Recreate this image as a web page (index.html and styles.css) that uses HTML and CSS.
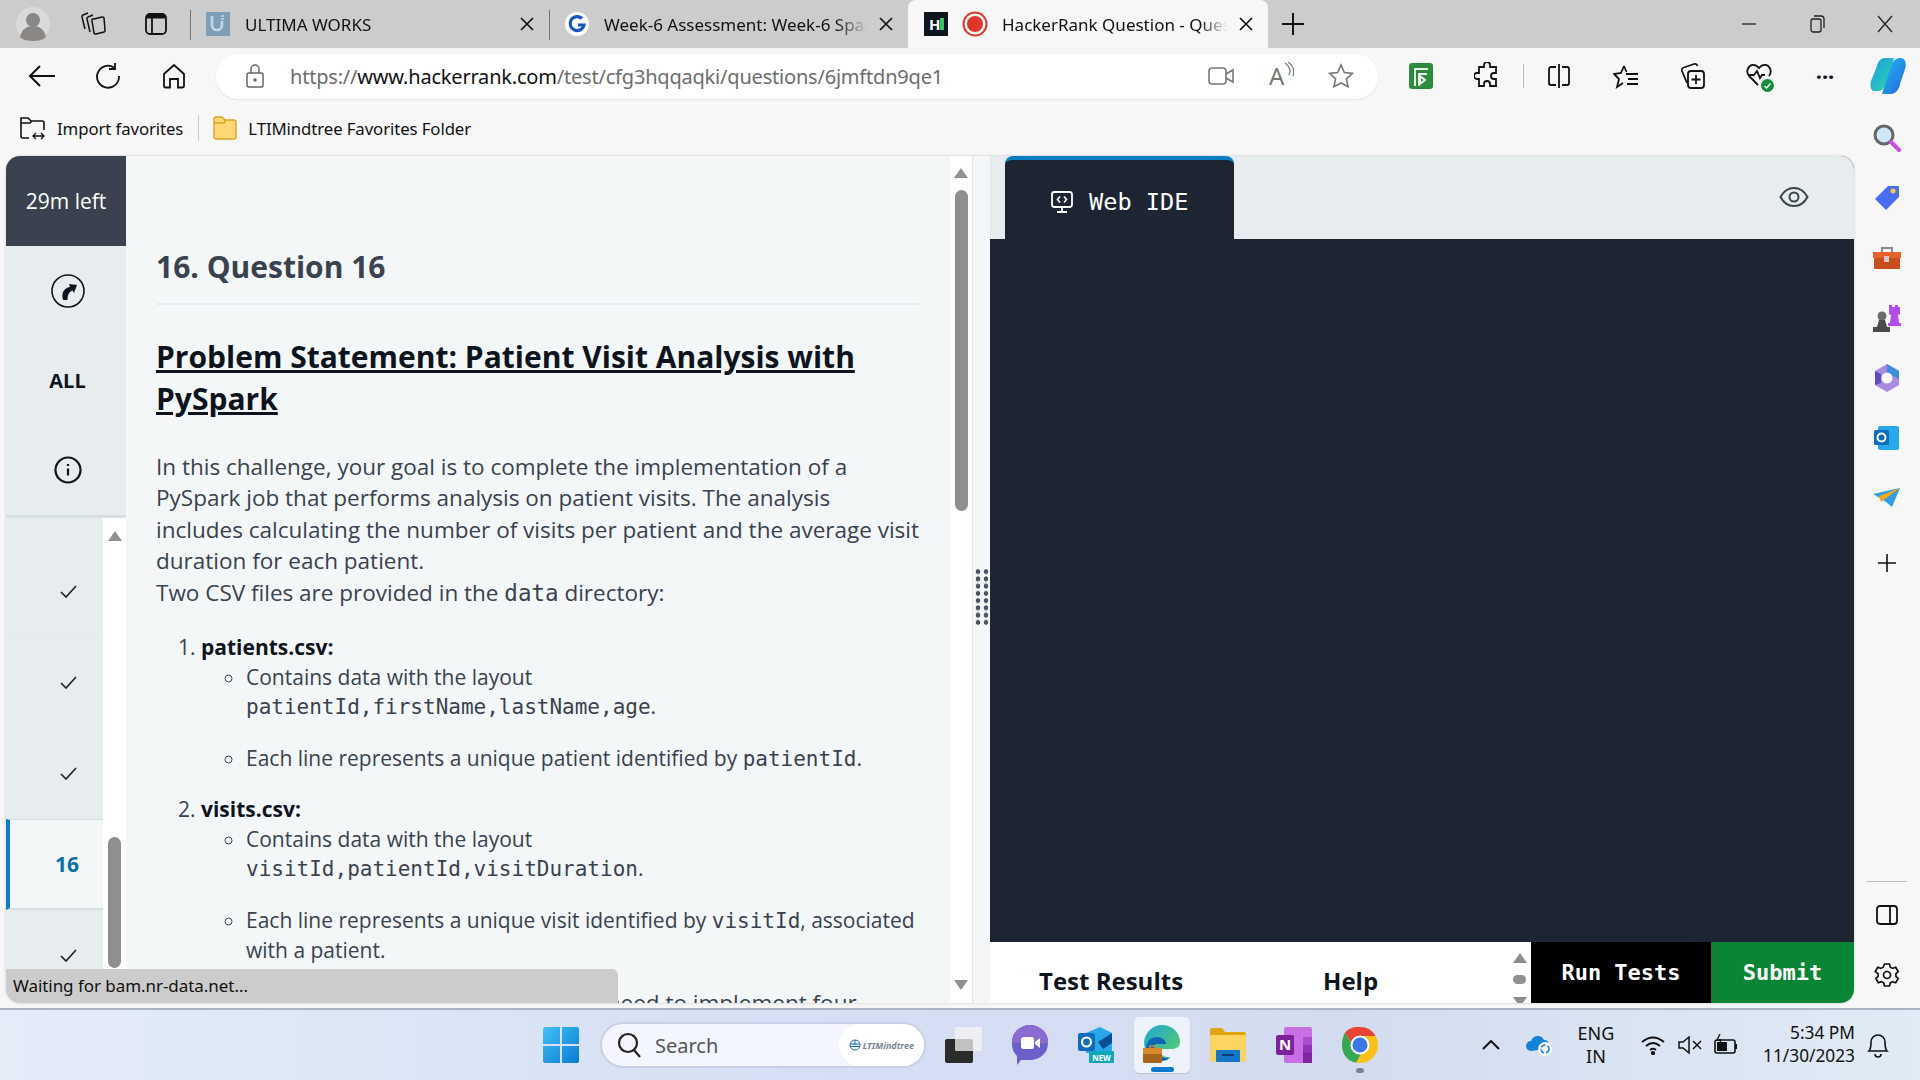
FILE: index.html
```html
<!DOCTYPE html>
<html lang="en">

<head>
    <meta charset="UTF-8">
    <title>HackerRank Question</title>
    <link rel="stylesheet" href="styles.css">
</head>

<body>
    <!-- tab strip -->
    <header class="tabstrip">
        <div class="avatar">
            <svg width="34" height="34" viewBox="0 0 34 34"><circle cx="17" cy="17" r="17" fill="#d9d9d9"/><circle cx="17" cy="13" r="7" fill="#8a8784"/><path d="M4 30c2-9 8-11 13-11s11 2 13 11c-3 3-8 4-13 4s-10-1-13-4z" fill="#8a8784"/></svg>
        </div>
        <button class="strip-btn">
            <svg width="26" height="26" viewBox="0 0 26 26" fill="none" stroke="#111" stroke-width="1.500" stroke-linejoin="round"><path d="M8 2 3 4a1.500 1.500 0 0 0-1 2l3 12"/><path d="M13 4 8 6a1.500 1.500 0 0 0-1 2l3 13"/><path d="M14 8l8-2a1.500 1.500 0 0 1 2 1l1 12a1.500 1.500 0 0 1-1 2l-8 2a1.500 1.500 0 0 1-2-1l-2-12a1.500 1.500 0 0 1 2-2z"/></svg>
        </button>
        <button class="strip-btn">
            <svg width="22" height="22" viewBox="0 0 22 22" fill="none" stroke="#111" stroke-width="1.800"><rect x="1" y="1" width="20" height="20" rx="4"/><path d="M7 5v16"/><path d="M2 3.500h18" stroke-width="4"/></svg>
        </button>
        <div class="tab">
            <svg class="favicon" width="24" height="24" viewBox="0 0 24 24"><rect width="24" height="24" fill="#7f9fb8"/><path d="M6 4v9a5 5 0 0 0 10 0V9" fill="none" stroke="#c6d6e2" stroke-width="2.600"/><path d="M15 4h3M18 7h-3" stroke="#c6d6e2" stroke-width="1.600"/></svg>
            <span class="tab-title">ULTIMA WORKS</span>
            <svg class="tab-close" width="14" height="14" viewBox="0 0 14 14" stroke="#111" stroke-width="1.700"><path d="m1 1 12 12M13 1 1 13"/></svg>
        </div>
        <div class="tab">
            <svg class="favicon" width="24" height="24" viewBox="0 0 24 24"><circle cx="12" cy="12" r="12" fill="#fff"/><path d="M17 6.500A7 7 0 1 0 19 13h-6" fill="none" stroke="#1a56c4" stroke-width="3.200"/></svg>
            <span class="tab-title">Week-6 Assessment: Week-6 Spark Fundamentals</span>
            <svg class="tab-close" width="14" height="14" viewBox="0 0 14 14" stroke="#111" stroke-width="1.700"><path d="m1 1 12 12M13 1 1 13"/></svg>
        </div>
        <div class="tab tab-active">
            <span class="favicon fav-hr">H<i class="fav-hr-bar"></i></span>
            <svg class="rec" width="26" height="26" viewBox="0 0 26 26"><circle cx="13" cy="13" r="11.500" fill="#fff" stroke="#e0352b" stroke-width="2"/><circle cx="13" cy="13" r="8" fill="#e0352b"/></svg>
            <span class="tab-title">HackerRank Question - Questions</span>
            <svg class="tab-close" width="14" height="14" viewBox="0 0 14 14" stroke="#111" stroke-width="1.700"><path d="m1 1 12 12M13 1 1 13"/></svg>
        </div>
        <svg class="new-tab" width="24" height="24" viewBox="0 0 24 24" stroke="#111" stroke-width="2"><path d="M12 1v22M1 12h22"/></svg>
        <div class="win-btns">
            <svg width="16" height="16" viewBox="0 0 16 16" stroke="#222" stroke-width="1.300"><path d="M1 8h14"/></svg>
            <svg width="16" height="18" viewBox="0 0 16 18" fill="none" stroke="#222" stroke-width="1.300"><rect x="2" y="4" width="10" height="13" rx="2"/><path d="M5 1h7q3 0 3 3v9"/></svg>
            <svg width="16" height="18" viewBox="0 0 16 18" stroke="#222" stroke-width="1.300"><path d="m1 1 14 16M15 1 1 17"/></svg>
        </div>
    </header>

    <!-- address bar -->
    <div class="toolbar">
        <svg class="tb-back" width="28" height="24" viewBox="0 0 28 24" fill="none" stroke="#111" stroke-width="2"><path d="M27 12H2M12 2 2 12l10 10"/></svg>
        <svg class="tb-reload" width="26" height="26" viewBox="0 0 26 26" fill="none" stroke="#111" stroke-width="1.800"><path d="M19 4.500A11 11 0 1 0 24 13"/><path d="M19 0v6h-6" transform="translate(1 0)"/></svg>
        <svg class="tb-home" width="24" height="26" viewBox="0 0 24 26" fill="none" stroke="#111" stroke-width="1.800"><path d="M2 11 12 2l10 9v12a1.500 1.500 0 0 1-1.500 1.500H16V16H8v8.500H3.500A1.500 1.500 0 0 1 2 23z"/></svg>
        <div class="address">
            <svg width="20" height="24" viewBox="0 0 20 24" fill="none" stroke="#666" stroke-width="1.500"><rect x="2" y="9" width="16" height="14" rx="2"/><path d="M6 9V5a4 4 0 0 1 8 0v4"/><circle cx="10" cy="16" r="1" fill="#666"/></svg>
            <span class="url"><span class="url-dim">https://</span>www.hackerrank.com<span class="url-dim">/test/cfg3hqqaqki/questions/6jmftdn9qe1</span></span>
            <svg class="addr-video" width="26" height="20" viewBox="0 0 26 20" fill="none" stroke="#777" stroke-width="1.600"><rect x="1" y="2" width="17" height="16" rx="3"/><path d="m18 8 7-4v12l-7-4"/></svg>
            <span class="addr-read">A<svg width="10" height="16" viewBox="0 0 10 16" fill="none" stroke="#777" stroke-width="1.300"><path d="M1 1q7 5 4 12M4 0q8 6 5 14"/></svg></span>
            <svg class="addr-star" width="26" height="26" viewBox="0 0 26 26" fill="none" stroke="#777" stroke-width="1.600"><path d="m13 2 3.400 7.500 8 .9-6 5.400 1.700 8L13 20l-7.100 3.800 1.700-8-6-5.400 8-.9z"/></svg>
        </div>
        <svg class="ext-green" width="24" height="26" viewBox="0 0 24 26"><rect width="24" height="26" rx="3" fill="#2e8b3d"/><path d="M6 23V6h13M10 23V11h8M11 13l5 4-5 4z" fill="none" stroke="#e9f5ea" stroke-width="2"/></svg>
        <svg class="tb-puzzle" width="26" height="28" viewBox="0 0 26 28" fill="none" stroke="#111" stroke-width="1.800"><path d="M10 3a3 3 0 0 1 6 0v2h6v6h-2a3 3 0 0 0 0 6h2v7H16v-2a3 3 0 0 0-6 0v2H5v-7H3a3 3 0 0 1 0-6h2V5h5z"/></svg>
        <span class="tb-sep"></span>
        <svg class="tb-split" width="24" height="24" viewBox="0 0 24 24" fill="none" stroke="#111" stroke-width="1.800"><path d="M9 3H4a2 2 0 0 0-2 2v14a2 2 0 0 0 2 2h5M15 3h5a2 2 0 0 1 2 2v14a2 2 0 0 1-2 2h-5M12 0v24"/></svg>
        <svg class="tb-favs" width="26" height="26" viewBox="0 0 26 26" fill="none" stroke="#111" stroke-width="1.800"><path d="M11 3 8 10l-7 1 5 5-2 8 6-4M13 11h12M15 16h10M14 21h11M11 3l2.500 6"/></svg>
        <svg class="tb-coll" width="26" height="28" viewBox="0 0 26 28" fill="none" stroke="#111" stroke-width="1.800"><path d="M7 21 2 9c-.500-1.500 0-3 2-3.500L14 2c2-.500 3 0 3.500 2"/><rect x="8" y="9" width="16" height="17" rx="3"/><path d="M16 13v9M11.500 17.500h9"/></svg>
        <span class="tb-heart">
            <svg width="26" height="28" viewBox="0 0 26 28" fill="none" stroke="#111" stroke-width="1.800"><path d="M12 23 3 14C-1 9 3 2 8 3c3 0 4 2 5 3 1-1 2-3 5-3 5-1 9 6 5 11"/><path d="M2 13h6l3-4 3 7 2-3h3"/></svg>
            <svg class="heart-ok" width="13" height="13" viewBox="0 0 13 13"><circle cx="6.500" cy="6.500" r="6.500" fill="#1a8a3c"/><path d="m3.500 7 2 2 4-4.500" fill="none" stroke="#fff" stroke-width="1.400"/></svg>
        </span>
        <span class="tb-dots">···</span>
        <svg class="tb-copilot" width="36" height="38" viewBox="0 0 36 38"><defs><linearGradient id="cpa" x1="0" y1="0" x2="1" y2="1"><stop offset="0" stop-color="#1d9be8"/><stop offset="1" stop-color="#2fd8a4"/></linearGradient><linearGradient id="cpb" x1="0" y1="0" x2="1" y2="1"><stop offset="0" stop-color="#1cc2f0"/><stop offset="1" stop-color="#2a5fe0"/></linearGradient></defs><path d="M7 9c1-5 4-8 8-8h9L16 27c-1 4-4 7-8 7H5C0 34 0 28 1 24z" fill="url(#cpa)"/><path d="M30 27c-1 6-5 10-9 10H12l9-28c1-4 4-8 9-8h1c4 0 6 6 4 11z" fill="url(#cpb)"/></svg>
    </div>

    <!-- favorites bar -->
    <div class="favbar">
        <svg width="26" height="26" viewBox="0 0 26 26" fill="none" stroke="#111" stroke-width="1.600"><path d="M9 23H3a2 2 0 0 1-2-2V3h7l3 3h11a2 2 0 0 1 2 2v7"/><path d="M1 8h9l2-2"/><path d="M13 21h11M16 18l-3 3 3 3M21 18l3 3-3 3" stroke-width="1.300"/></svg>
        <span class="fav-text">Import favorites</span>
        <span class="fav-sep"></span>
        <svg width="24" height="24" viewBox="0 0 24 24"><path d="M1 3a2 2 0 0 1 2-2h6l3 3h9a2 2 0 0 1 2 2v15a2 2 0 0 1-2 2H3a2 2 0 0 1-2-2z" fill="#ffd877" stroke="#d8a521" stroke-width="1.400"/><path d="M1 7h10l2-3" fill="none" stroke="#d8a521" stroke-width="1.400"/></svg>
        <span class="fav-text">LTIMindtree Favorites Folder</span>
    </div>

    <div class="workarea">
        <!-- the HackerRank page -->
        <div class="page">
            <aside class="rail">
                <div class="timer">29m left</div>
                <div class="rail-nav">
                    <div class="rail-link">
                        <svg width="34" height="34" viewBox="0 0 34 34"><circle cx="17" cy="17" r="16" fill="none" stroke="#0e141e" stroke-width="1.600"/><path d="M12 26c-2-7 1-12 7-13l-1-3 8 1-3 8-1.500-2.500c-3 1-5 4-5 9.500z" fill="#0e141e"/></svg>
                    </div>
                    <div class="rail-link rail-all">ALL</div>
                    <div class="rail-link">
                        <svg width="28" height="28" viewBox="0 0 28 28" fill="none" stroke="#0e141e" stroke-width="2.200"><circle cx="14" cy="14" r="12.500"/><path d="M14 12.500v7"/><path d="M14 8v2"/></svg>
                    </div>
                </div>
                <div class="rail-list">
                    <div class="rail-items">
                        <div class="rail-item"><svg class="check" width="17" height="13" viewBox="0 0 17 13" fill="none" stroke="#1d2532" stroke-width="1.700"><path d="m1 7 5 5L16 1"/></svg></div>
                        <div class="rail-item"><svg class="check" width="17" height="13" viewBox="0 0 17 13" fill="none" stroke="#1d2532" stroke-width="1.700"><path d="m1 7 5 5L16 1"/></svg></div>
                        <div class="rail-item"><svg class="check" width="17" height="13" viewBox="0 0 17 13" fill="none" stroke="#1d2532" stroke-width="1.700"><path d="m1 7 5 5L16 1"/></svg></div>
                        <div class="rail-item rail-current">16</div>
                        <div class="rail-item"><svg class="check" width="17" height="13" viewBox="0 0 17 13" fill="none" stroke="#1d2532" stroke-width="1.700"><path d="m1 7 5 5L16 1"/></svg></div>
                    </div>
                    <div class="rail-scroll">
                        <i class="arrow-up"></i>
                        <i class="rail-thumb"></i>
                    </div>
                </div>
            </aside>

            <section class="question">
                <div class="question-body">
                    <h1 class="q-title">16. Question 16</h1>
                    <h2 class="q-head">Problem Statement: Patient Visit Analysis with PySpark</h2>
                    <p class="q-text">In this challenge, your goal is to complete the implementation of a PySpark job that performs analysis on patient visits. The analysis includes calculating the number of visits per patient and the average visit duration for each patient.<br>Two CSV files are provided in the <code>data</code> directory:</p>
                    <ol class="q-files">
                        <li><strong>patients.csv:</strong>
                            <ul>
                                <li>Contains data with the layout <code>patientId,firstName,lastName,age</code>.</li>
                                <li>Each line represents a unique patient identified by <code>patientId</code>.</li>
                            </ul>
                        </li>
                        <li><strong>visits.csv:</strong>
                            <ul>
                                <li>Contains data with the layout <code>visitId,patientId,visitDuration</code>.</li>
                                <li>Each line represents a unique visit identified by <code>visitId</code>, associated with a patient.</li>
                            </ul>
                        </li>
                    </ol>
                    <p class="q-more">You need to implement four</p>
                </div>
                <div class="q-scroll">
                    <i class="arrow-up"></i>
                    <i class="q-thumb"></i>
                    <i class="arrow-down"></i>
                </div>
            </section>

            <div class="splitter">
                <span class="dots"></span>
            </div>

            <section class="ide">
                <div class="ide-tabs">
                    <div class="ide-tab">
                        <svg width="24" height="24" viewBox="0 0 24 24" fill="none" stroke="#fff" stroke-width="1.800"><rect x="2" y="2" width="20" height="15" rx="2.500"/><path d="M12 17v4M7 22h10"/><path d="M10 6.500 7.500 9.500l2.500 3M14 6.500l2.500 3-2.500 3" stroke-width="1.600"/></svg>
                        <span>Web IDE</span>
                    </div>
                    <svg class="eye" width="30" height="22" viewBox="0 0 30 22" fill="none" stroke="#39424e" stroke-width="2"><path d="M1.500 11C5 4.500 10 2 15 2s10 2.500 13.500 9C25 17.500 20 20 15 20S5 17.500 1.500 11z"/><circle cx="15" cy="11" r="4.500"/></svg>
                </div>
                <div class="editor"></div>
                <div class="ide-foot">
                    <div class="foot-tabs">
                        <span class="foot-results">Test Results</span>
                        <span class="foot-help">Help</span>
                    </div>
                    <div class="foot-scroll">
                        <i class="arrow-up"></i>
                        <i class="foot-thumb"></i>
                        <i class="arrow-down"></i>
                    </div>
                    <button class="btn-run">Run Tests</button>
                    <button class="btn-submit">Submit</button>
                </div>
            </section>

            <div class="status">Waiting for bam.nr-data.net...</div>
        </div>

        <!-- edge sidebar -->
        <nav class="sidebar">
            <span class="side-slot"><svg width="28" height="28" viewBox="0 0 28 28"><circle cx="11" cy="11" r="9" fill="#cfe8f7" stroke="#666" stroke-width="3"/><path d="m18 18 8 8" stroke="#c94fe8" stroke-width="4" stroke-linecap="round"/></svg></span>
            <span class="side-slot"><svg width="26" height="26" viewBox="0 0 26 26"><path d="M14 1h10a1 1 0 0 1 1 1v10L12 25 1 14z" fill="#4a6cf0"/><circle cx="19" cy="6" r="2.500" fill="#f6c945"/></svg></span>
            <span class="side-slot"><svg width="28" height="24" viewBox="0 0 28 24"><path d="M9 6V2h10v4" fill="none" stroke="#8a8a8a" stroke-width="2"/><rect y="6" width="28" height="6" fill="#e8602a"/><rect x="1" y="12" width="26" height="11" rx="1" fill="#c94c1c"/><rect x="11" y="10" width="5" height="6" fill="#ccc"/></svg></span>
            <span class="side-slot"><svg width="28" height="28" viewBox="0 0 28 28"><path d="M16 1h3v2h3V1h3v2h2v7l-2 1 1 8h2v3H15v-3h2l1-8-2-1z" fill="#b34dee"/><circle cx="9" cy="12" r="4.500" fill="#6c6c6c"/><path d="M6 16h6l2 7h3v5H0v-5h4z" fill="#4a4a4a"/></svg></span>
            <span class="side-slot"><svg width="26" height="28" viewBox="0 0 26 28"><path d="M13 0 25 7v14l-12 7L1 21V7z" fill="#a98ae0"/><path d="M13 0 25 7v8l-6-3-6-3z" fill="#3d8ee0"/><path d="M1 7l6 3v9l-6 2z" fill="#5e4cc0"/><circle cx="13" cy="14" r="5.500" fill="#f7f7f7"/></svg></span>
            <span class="side-slot"><svg width="26" height="26" viewBox="0 0 26 26"><rect x="4" y="1" width="21" height="24" rx="2" fill="#28a8ea"/><rect y="5" width="15" height="15" rx="1.500" fill="#0f6cbd"/><circle cx="7.500" cy="12.500" r="4" fill="none" stroke="#fff" stroke-width="2"/></svg></span>
            <span class="side-slot"><svg width="28" height="20" viewBox="0 0 28 20"><path d="M0 6 27 0 19 19 13 14z" fill="#2f9ee8"/><path d="M6 8 27 0 8 14z" fill="#f2a71b"/></svg></span>
            <svg class="side-plus" width="20" height="20" viewBox="0 0 20 20" stroke="#111" stroke-width="1.600"><path d="M10 1v18M1 10h18"/></svg>
            <span class="side-line"></span>
            <svg class="side-panel" width="22" height="20" viewBox="0 0 22 20" fill="none" stroke="#111" stroke-width="1.800"><rect x="1" y="1" width="20" height="18" rx="3"/><path d="M14 1v18"/></svg>
            <svg class="side-gear" width="26" height="26" viewBox="0 0 26 26" fill="none" stroke="#111" stroke-width="1.700"><path d="M10.500 2h5l.800 3.200 2.400 1.200 3-1.100 2.500 4.300-2.300 2.100v2.600l2.300 2.100-2.500 4.300-3-1.100-2.400 1.200-.800 3.200h-5l-.800-3.200-2.400-1.200-3 1.100-2.500-4.300 2.300-2.100v-2.600L1.300 9.600l2.500-4.300 3 1.100 2.400-1.200z"/><circle cx="13" cy="13" r="3.500"/></svg>
        </nav>
    </div>

    <!-- windows taskbar -->
    <footer class="taskbar">
        <svg class="start" width="36" height="36" viewBox="0 0 36 36"><defs><linearGradient id="win" x1="0" y1="0" x2="1" y2="1"><stop offset="0" stop-color="#3fc3f7"/><stop offset="1" stop-color="#0a78d4"/></linearGradient></defs><path d="M0 2a2 2 0 0 1 2-2h15v17H0zM19 0h15a2 2 0 0 1 2 2v15H19zM0 19h17v17H2a2 2 0 0 1-2-2zM19 19h17v15a2 2 0 0 1-2 2H19z" fill="url(#win)"/></svg>
        <div class="search">
            <svg width="24" height="26" viewBox="0 0 24 26" fill="none" stroke="#222" stroke-width="2.200"><circle cx="11" cy="11" r="9"/><path d="m17 18 6 7"/></svg>
            <span class="search-text">Search</span>
            <span class="search-brand">
                <svg width="12" height="12" viewBox="0 0 12 12" fill="none" stroke="#1a6fb0" stroke-width="1"><circle cx="6" cy="6" r="5"/><path d="M1 5h10M1 7.500h10M6 1v5"/></svg>
                <em>LTIMindtree</em>
            </span>
        </div>
        <div class="tray-apps">
            <span class="app">
                <svg width="38" height="36" viewBox="0 0 38 36"><rect x="0" y="12" width="28" height="24" rx="2" fill="#2b2b2b"/><rect x="10" y="0" width="27" height="24" rx="1" fill="#f4f4f4" fill-opacity=".75"/></svg>
            </span>
            <span class="app">
                <svg width="36" height="40" viewBox="0 0 36 40"><path d="M18 0a18 17 0 0 1 18 18c0 10-8 17-18 17H9l-4 5v-9C2 28 0 24 0 18A18 17 0 0 1 18 0z" fill="#6b5fc9"/><path d="M18 0a18 17 0 0 1 18 18H0A18 17 0 0 1 18 0z" fill="#8a6bd0"/><rect x="9" y="12" width="13" height="12" rx="2.500" fill="#fff"/><path d="m23 17 5-4v10l-5-4z" fill="#fff"/></svg>
            </span>
            <span class="app">
                <svg width="36" height="36" viewBox="0 0 36 36"><path d="M8 6 22 0l12 6v20H8z" fill="#28a8ea"/><path d="M20 15 34 6v10l-9 6z" fill="#0a4f96"/><rect y="6" width="17" height="18" rx="2" fill="#0f6cbd"/><circle cx="8.500" cy="15" r="4.500" fill="none" stroke="#fff" stroke-width="2.200"/><rect x="11" y="24" width="25" height="12" rx="1" fill="#11a6b8"/><text x="23.500" y="34" class="new-badge">NEW</text></svg>
            </span>
            <span class="app app-on">
                <svg width="38" height="40" viewBox="0 0 38 40"><defs><linearGradient id="edg" x1="0" y1="0" x2="1" y2="1"><stop offset="0" stop-color="#22a5d8"/><stop offset="1" stop-color="#5bd25c"/></linearGradient></defs><path d="M1 17C2 7 10 0 19 0c11 0 18 8 18 17 0 5-4 7-8 7H16c0 5 5 9 12 8-3 3-6 4-10 4C8 36 1 28 1 17z" fill="url(#edg)"/><path d="M3 22c1-7 6-10 11-10 6 0 9 4 9 7H12c-1 6 3 15 14 14-2 2-5 3-8 3C10 36 3 30 3 22z" fill="#0c66b4"/><rect x="0" y="23" width="19" height="15" rx="1.500" fill="#a8641a"/><rect x="0" y="23" width="19" height="6" fill="#d98b2b"/><rect x="7" y="21" width="5" height="3" fill="none" stroke="#d98b2b" stroke-width="1.500"/></svg>
                <i class="app-bar"></i>
            </span>
            <span class="app">
                <svg width="36" height="34" viewBox="0 0 36 34"><path d="M0 2a2 2 0 0 1 2-2h10l3 4h19a2 2 0 0 1 2 2v4H0z" fill="#e0a612"/><path d="M0 7h36v25a2 2 0 0 1-2 2H2a2 2 0 0 1-2-2z" fill="#fcd462"/><rect x="6" y="22" width="24" height="12" rx="1" fill="#1177c9"/><rect x="12" y="26" width="12" height="2" fill="#083d70"/></svg>
            </span>
            <span class="app">
                <svg width="36" height="36" viewBox="0 0 36 36"><rect x="8" width="28" height="36" rx="2" fill="#c86fe6"/><rect x="27" y="10" width="9" height="8" fill="#a94dcb"/><rect x="27" y="18" width="9" height="8" fill="#9332b6"/><rect x="27" y="26" width="9" height="10" fill="#7f249f"/><rect y="8" width="18" height="20" rx="2" fill="#7b2299"/><text x="9" y="23" class="one-n">N</text></svg>
            </span>
            <span class="app">
                <svg width="36" height="36" viewBox="0 0 36 36"><circle cx="18" cy="18" r="18" fill="#fbc116"/><path d="M18 0a18 18 0 0 1 15.600 9H18a9 9 0 0 0-8.700 6.500L3 5.500A18 18 0 0 1 18 0z" fill="#ea4335"/><path d="M3 5.500 10.500 18a9 9 0 0 0 8.500 9l-5 8.500C5 34 0 27 0 18 0 13 1 9 3 5.500z" fill="#34a853"/><circle cx="18" cy="18" r="8.500" fill="#3b78e7" stroke="#fff" stroke-width="2"/></svg>
                <i class="app-dot"></i>
            </span>
        </div>
        <div class="tray">
            <svg class="tray-chev" width="18" height="10" viewBox="0 0 18 10" fill="none" stroke="#111" stroke-width="2"><path d="m1 9 8-8 8 8"/></svg>
            <svg class="tray-cloud" width="28" height="24" viewBox="0 0 28 24"><path d="M6 18a5 5 0 0 1 0-10 7 7 0 0 1 13-1 5 5 0 0 1 3 9z" fill="#1283d6"/><circle cx="20" cy="16" r="7" fill="#fff"/><circle cx="20" cy="16" r="4" fill="none" stroke="#1283d6" stroke-width="1.600" stroke-dasharray="5 2"/></svg>
            <span class="tray-lang">ENG<br>IN</span>
            <svg class="tray-wifi" width="24" height="20" viewBox="0 0 24 20" fill="none" stroke="#111" stroke-width="1.800"><path d="M1 7q11-9 22 0M5 11q7-6 14 0M9 15q3-2.500 6 0"/><circle cx="12" cy="18" r="1.200" fill="#111"/></svg>
            <svg class="tray-vol" width="24" height="20" viewBox="0 0 24 20" fill="none" stroke="#111" stroke-width="1.500"><path d="M1 7v6h4l6 5V2L5 7z"/><path d="m15 6 8 8M23 6l-8 8"/></svg>
            <svg class="tray-batt" width="24" height="22" viewBox="0 0 24 22" fill="none" stroke="#111" stroke-width="1.600"><rect x="1" y="6" width="20" height="13" rx="2"/><rect x="3" y="8" width="10" height="9" fill="#111" stroke="none"/><path d="M22 10v5" stroke-width="2"/><path d="M6 0 3 6h4l-2 5" stroke-width="1.300"/></svg>
            <span class="tray-clock">5:34 PM<br>11/30/2023</span>
            <svg class="tray-bell" width="22" height="26" viewBox="0 0 22 26" fill="none" stroke="#111" stroke-width="1.600"><path d="M2 19c2-2 2-4 2-9a7 7 0 0 1 14 0c0 5 0 7 2 9z"/><path d="M8 22a3 3 0 0 0 6 0"/></svg>
        </div>
    </footer>
</body></html>
```

FILE: styles.css
```css
* {
    box-sizing: border-box;
    padding: 0;
    margin: 0;
}

html,
body {
    width: 1920px;
    height: 1080px;
    overflow: hidden;
}

body {
    display: flex;
    flex-direction: column;
    background: #f7f7f7;
    font-family: "Noto Sans", sans-serif;
    color: #111;
}

button {
    border: 0;
    background: none;
}

/* tab strip */
.tabstrip {
    display: flex;
    align-items: center;
    height: 48px;
    background: #ccc;
    flex: none;
}

.avatar {
    width: 34px;
    height: 34px;
    margin-left: 16px;
}

.strip-btn {
    display: flex;
    justify-content: center;
    width: 26px;
    margin-left: 30px;
}

.strip-btn + .strip-btn {
    margin-left: 37px;
}

.tab {
    display: flex;
    align-items: center;
    width: 359px;
    height: 48px;
    padding: 0 15px 0 16px;
    font-size: 17px;
    position: relative;
}

.strip-btn + .tab {
    margin-left: 21px;
}

.tab::before {
    content: "";
    position: absolute;
    left: 0;
    top: 10px;
    width: 1px;
    height: 30px;
    background: #777;
}

.tab-active {
    width: 360px;
    background: #f7f7f7;
    border-radius: 8px 8px 0 0;
}

.tab-active::before {
    display: none;
}

.favicon {
    flex: none;
    width: 24px;
    height: 24px;
}

.fav-hr {
    position: relative;
    padding-left: 5px;
    background: #0e141e;
    color: #fff;
    font-size: 15px;
    font-weight: 700;
    line-height: 24px;
}

.fav-hr-bar {
    position: absolute;
    right: 4px;
    top: 6px;
    width: 4px;
    height: 12px;
    background: #2ec866;
}

.rec {
    flex: none;
    margin-left: 14px;
}

.tab-title {
    flex: 1;
    margin-left: 15px;
    white-space: nowrap;
    overflow: hidden;
    -webkit-mask-image: linear-gradient(to right, #000 88%, transparent);
    mask-image: linear-gradient(to right, #000 88%, transparent);
}

.tab-active .tab-title {
    margin-left: 14px;
}

.tab-close {
    flex: none;
    margin-left: 12px;
}

.new-tab {
    margin-left: 13px;
}

.win-btns {
    display: flex;
    align-items: center;
    gap: 52px;
    margin-left: auto;
    margin-right: 27px;
}

/* address bar */
.toolbar {
    display: flex;
    align-items: center;
    height: 56px;
    flex: none;
    position: relative;
}

.tb-back {
    margin-left: 28px;
}

.tb-reload {
    margin-left: 39px;
}

.tb-home {
    margin-left: 41px;
}

.address {
    display: flex;
    align-items: center;
    width: 1162px;
    height: 45px;
    margin-left: 30px;
    padding-left: 29px;
    background: #fff;
    border-radius: 23px;
    box-shadow: 0 1px 2px rgba(0, 0, 0, .08);
}

.url {
    margin-left: 25px;
    font-size: 20px;
    color: #111;
    letter-spacing: -.2px;
    white-space: nowrap;
}

.url-dim {
    color: #6d6d6d;
}

.addr-video {
    margin-left: auto;
}

.addr-read {
    display: flex;
    width: 26px;
    margin-left: 35px;
    color: #777;
    font-size: 24px;
    line-height: 28px;
}

.addr-star {
    margin: 0 24px 0 33px;
}

.ext-green {
    margin-left: 31px;
}

.tb-puzzle {
    margin-left: 41px;
}

.tb-sep {
    width: 1px;
    height: 24px;
    margin-left: 23px;
    background: #bbb;
}

.tb-split {
    margin-left: 23px;
}

.tb-favs {
    margin-left: 42px;
}

.tb-coll {
    margin-left: 41px;
}

.tb-heart {
    position: relative;
    display: flex;
    margin-left: 40px;
}

.heart-ok {
    position: absolute;
    right: -2px;
    bottom: -2px;
}

.tb-dots {
    width: 24px;
    margin-left: 41px;
    font-size: 22px;
    font-weight: 700;
    line-height: 22px;
    text-align: center;
}

.tb-copilot {
    margin-left: 33px;
}

/* favorites bar */
.favbar {
    display: flex;
    align-items: center;
    height: 52px;
    padding: 0 0 4px 20px;
    flex: none;
}

.fav-text {
    margin-left: 11px;
    font-size: 16.800px;
    letter-spacing: -.1px;
}

.fav-sep {
    width: 1px;
    height: 26px;
    margin: 0 14px 0 15px;
    background: #ccc;
}

/* main area */
.workarea {
    display: flex;
    flex: 1;
    min-height: 0;
}

.page {
    position: relative;
    display: flex;
    width: 1848px;
    height: 847px;
    margin-left: 6px;
    border-radius: 14px;
    overflow: hidden;
    background: #f4f7f8;
    box-shadow: 0 0 3px rgba(0, 0, 0, .18);
    font-family: "Open Sans", sans-serif;
}

/* left rail */
.rail {
    display: flex;
    flex-direction: column;
    width: 120px;
    flex: none;
    background: #e7edef;
}

.timer {
    height: 90px;
    background: #39424e;
    color: #fff;
    font-size: 21px;
    line-height: 90px;
    text-align: center;
    flex: none;
}

.rail-nav {
    display: flex;
    flex-direction: column;
    height: 272px;
    flex: none;
    border-bottom: 3px solid #d6dfe2;
}

.rail-link {
    display: flex;
    align-items: center;
    justify-content: center;
    width: 120px;
    height: 90px;
    padding-left: 3px;
}

.rail-all {
    color: #0e141e;
    font-size: 20px;
    font-weight: 700;
}

.rail-list {
    display: flex;
    flex: 1;
    min-height: 0;
}

.rail-items {
    width: 97px;
    padding-top: 28px;
    overflow: hidden;
}

.rail-item {
    display: flex;
    align-items: center;
    justify-content: center;
    height: 91px;
    padding-left: 28px;
    border-bottom: 1px solid #e3eaec;
}

.rail-current {
    padding-left: 21px;
    background: #f4f7f8;
    border-left: 4px solid #0a7ec2;
    border-top: 1px solid #d6dfe2;
    border-bottom: 2px solid #d6dfe2;
    color: #0a6ea8;
    font-size: 21px;
    font-weight: 700;
}

.rail-scroll {
    position: relative;
    width: 23px;
    background: #fff;
}

.arrow-up,
.arrow-down {
    display: block;
    flex: none;
    width: 0;
    height: 0;
    border-left: 7px solid transparent;
    border-right: 7px solid transparent;
}

.arrow-up {
    border-bottom: 10px solid #8f8f8f;
}

.arrow-down {
    border-top: 10px solid #8f8f8f;
}

.rail-scroll .arrow-up {
    margin: 13px 0 0 5px;
}

.rail-thumb {
    display: block;
    width: 13px;
    height: 131px;
    margin: 296px 0 0 5px;
    border-radius: 7px;
    background: #8f8f8f;
}

/* question panel */
.question {
    display: flex;
    width: 847px;
    flex: none;
    min-height: 0;
}

.question-body {
    width: 824px;
    padding: 90px 30px 0;
    flex: none;
    overflow: hidden;
    color: #39424e;
}

.q-title {
    height: 59px;
    border-bottom: 2px solid #e7edef;
    font-size: 30px;
    font-weight: 700;
    line-height: 42px;
}

.q-head {
    margin-top: 31px;
    color: #0e141e;
    font-size: 30px;
    font-weight: 700;
    line-height: 42px;
    text-decoration: underline;
}

.q-text {
    margin-top: 31px;
    font-size: 22.500px;
    line-height: 31.400px;
}

code {
    font-family: "DejaVu Sans Mono", monospace;
    font-size: 1em;
}

.q-files {
    margin-top: 24px;
    padding-left: 45px;
    font-size: 21px;
    line-height: 29.500px;
}

.q-files strong {
    color: #0e141e;
}

.q-files > li {
    margin-bottom: 21px;
}

.q-files ul {
    padding-left: 45px;
    list-style: circle;
}

.q-files ul li {
    margin-bottom: 21px;
}

.q-files ul li:last-child {
    margin-bottom: 0;
}

.q-more {
    margin-top: 1px;
    padding-left: 405px;
    font-size: 22.500px;
    line-height: 31.400px;
    white-space: nowrap;
}

.q-scroll {
    width: 23px;
    background: #fff;
    border-right: 1px solid #e1e8ea;
    display: flex;
    flex-direction: column;
    align-items: center;
    padding-top: 12px;
}

.q-thumb {
    display: block;
    flex: none;
    width: 13px;
    height: 321px;
    margin-top: 12px;
    border-radius: 7px;
    background: #8f8f8f;
}

.q-scroll .arrow-down {
    margin-top: auto;
    margin-bottom: 13px;
}

.splitter {
    width: 17px;
    flex: none;
}

.dots {
    display: block;
    width: 16px;
    height: 58px;
    margin: 412px 0 0 1px;
    background-image: radial-gradient(circle, #4b5563 2.200px, transparent 2.600px);
    background-size: 8px 7.250px;
}

/* ide */
.ide {
    display: flex;
    flex-direction: column;
    flex: 1;
    background: #1d2532;
    min-width: 0;
}

.ide-tabs {
    display: flex;
    height: 83px;
    padding-left: 15px;
    background: #e7edef;
    flex: none;
    position: relative;
}

.ide-tab {
    display: flex;
    align-items: center;
    gap: 15px;
    width: 229px;
    padding: 5px 0 0 45px;
    background: #1d2532;
    border-top: 4px solid #0a7ec2;
    border-radius: 8px 8px 0 0;
    color: #fff;
    font-family: "DejaVu Sans Mono", monospace;
    font-size: 23.600px;
    white-space: pre;
}

.eye {
    position: absolute;
    right: 45px;
    top: 30px;
}

.editor {
    flex: 1;
}

.ide-foot {
    display: flex;
    height: 61px;
    background: #fff;
    flex: none;
}

.foot-tabs {
    display: flex;
    align-items: flex-end;
    flex: 1;
    padding: 0 0 6px 49px;
    font-size: 24px;
    font-weight: 700;
    color: #0e141e;
}

.foot-help {
    margin-left: 140px;
}

.foot-scroll {
    display: flex;
    flex-direction: column;
    align-items: center;
    width: 23px;
    padding-top: 11px;
    overflow: hidden;
}

.foot-thumb {
    display: block;
    flex: none;
    width: 13px;
    height: 9px;
    margin-top: 12px;
    border-radius: 5px;
    background: #8f8f8f;
}

.foot-scroll .arrow-down {
    margin-top: 13px;
}

.btn-run,
.btn-submit {
    color: #fff;
    font-family: "DejaVu Sans Mono", monospace;
    font-size: 22px;
    font-weight: 700;
}

.btn-run {
    width: 180px;
    background: #000;
}

.btn-submit {
    width: 143px;
    background: #0a8536;
}

.status {
    position: absolute;
    left: -1px;
    bottom: 0;
    width: 613px;
    height: 34px;
    padding-left: 8px;
    background: #ccc;
    border-top-right-radius: 6px;
    font-family: "Noto Sans", sans-serif;
    font-size: 17px;
    letter-spacing: -.05px;
    line-height: 34px;
}

/* edge sidebar */
.sidebar {
    display: flex;
    flex-direction: column;
    align-items: center;
    width: 66px;
    height: 895px;
    margin-top: -48px;
    flex: none;
}

.side-slot {
    display: flex;
    align-items: center;
    justify-content: center;
    height: 60px;
    flex: none;
}

.side-plus {
    margin-top: 25px;
}

.side-line {
    width: 40px;
    height: 1px;
    margin-top: auto;
    background: #bbb;
}

.side-panel {
    margin-top: 23px;
}

.side-gear {
    margin-top: 37px;
    margin-bottom: 15px;
}

/* taskbar */
.taskbar {
    display: flex;
    align-items: center;
    height: 72px;
    flex: none;
    border-top: 2px solid #aab3c2;
    background: linear-gradient(90deg, #e3ecf7 0%, #d5def3 45%, #d3dcef 70%, #e0ebf5 100%);
}

.start {
    margin-left: 543px;
}

.search {
    display: flex;
    align-items: center;
    width: 326px;
    height: 46px;
    margin-left: 21px;
    padding-left: 15px;
    background: #f3f6fd;
    border: 2px solid #c8d0e4;
    border-radius: 23px;
}

.search-text {
    margin-left: 14px;
    color: #555;
    font-size: 20px;
}

.search-brand {
    display: flex;
    align-items: center;
    gap: 2px;
    height: 42px;
    margin-left: auto;
    padding: 0 10px;
    background: #fff;
    border-radius: 21px;
    color: #7a8591;
    font-size: 9px;
    font-weight: 700;
}

.tray-apps {
    display: flex;
    align-items: center;
    margin-left: 5px;
}

.app {
    position: relative;
    display: flex;
    align-items: center;
    justify-content: center;
    width: 66px;
    height: 56px;
}

.app-on {
    background: #eef2fb;
    border-radius: 5px;
    box-shadow: 0 1px 1px rgba(0, 0, 0, .12);
    width: 56px;
    margin: 0 5px;
}

.app-bar {
    position: absolute;
    left: 17px;
    bottom: 1px;
    width: 23px;
    height: 5px;
    border-radius: 3px;
    background: #0a78d4;
}

.app-dot {
    position: absolute;
    left: 29px;
    bottom: 0;
    width: 8px;
    height: 5px;
    border-radius: 3px;
    background: #7d8490;
}

.new-badge {
    fill: #fff;
    font-size: 8px;
    font-weight: 700;
    font-family: "Noto Sans", sans-serif;
    text-anchor: middle;
}

.one-n {
    fill: #fff;
    font-size: 15px;
    font-weight: 700;
    font-family: "Noto Sans", sans-serif;
    text-anchor: middle;
}

.tray {
    display: flex;
    align-items: center;
    flex: 1;
    padding-left: 89px;
}

.tray-cloud {
    margin-left: 25px;
}

.tray-lang {
    width: 44px;
    margin-left: 21px;
    font-size: 18px;
    line-height: 23px;
    text-align: center;
}

.tray-wifi {
    margin-left: 23px;
}

.tray-vol {
    margin-left: 13px;
}

.tray-batt {
    margin-left: 12px;
}

.tray-clock {
    margin-left: auto;
    margin-bottom: 2px;
    font-size: 17.300px;
    line-height: 23px;
    text-align: right;
}

.tray-bell {
    margin: 0 31px 0 12px;
}
```
